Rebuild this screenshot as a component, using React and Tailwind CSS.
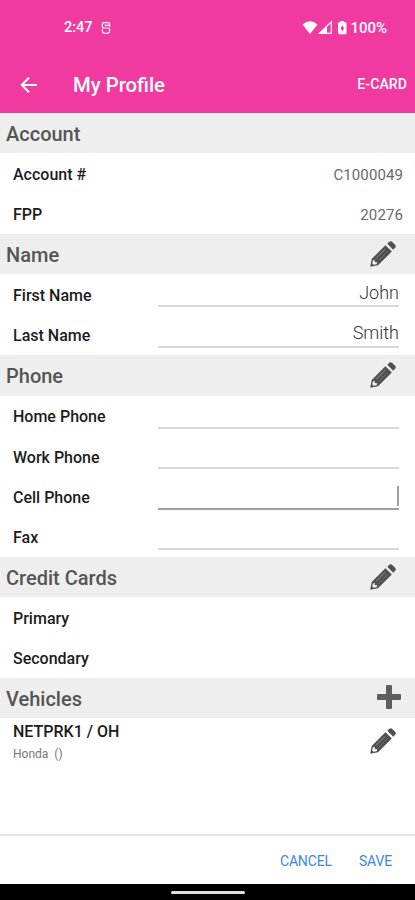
import React from 'react';

const phones = [
  { label: 'Home Phone' },
  { label: 'Work Phone' },
  { label: 'Cell Phone', focused: true },
  { label: 'Fax' },
];

function PencilIcon() {
  return (
    <svg width="28" height="28" viewBox="0 0 28 28" fill="#505050">
      <path d="M18.3 3.8 L20.4 1.7 Q21.7 0.6 23 1.7 L26.3 5 Q27.4 6.3 26.3 7.6 L24.2 9.7 Z" />
      <path
        fillRule="evenodd"
        d="M16.4 5.2 L22.8 11.6 L9 25.3 L1.2 26.8 L2.7 19 Z M3.9 20.4 L3.2 23.4 L4.6 24.8 L7.7 24.2 L8.2 22.3 L5.8 22 L5.6 19.8 Z"
      />
      <path d="M7 18.4 L16 9.4" stroke="#9a9a9a" strokeWidth="0.9" />
      <path d="M9.4 20.6 L18.6 11.4" stroke="#7c7c7c" strokeWidth="0.6" />
    </svg>
  );
}

function PlusIcon() {
  return (
    <svg width="24" height="24" viewBox="0 0 24 24" fill="#5e5e5e">
      <path d="M10 0 H14 Q15 0 15 1 V9 H23 Q24 9 24 10 V14 Q24 15 23 15 H15 V23 Q15 24 14 24 H10 Q9 24 9 23 V15 H1 Q0 15 0 14 V10 Q0 9 1 9 H9 V1 Q9 0 10 0 Z" />
    </svg>
  );
}

function SectionHeader({ title, children }) {
  return (
    <div className="flex h-[40.36px] items-center justify-between bg-[#eeeeee] pl-1.5">
      <h2 className="pt-0.5 text-[20px] font-medium text-[#555555]">{title}</h2>
      {children}
    </div>
  );
}

function Row({ label, value }) {
  return (
    <div className="flex h-[40.36px] items-center justify-between pr-3 pl-[13px] pt-[3px]">
      <span className="text-[16px] font-medium text-[#1c1c1c]">{label}</span>
      {value && <span className="text-[15px] tracking-[0.1px] text-[#6a6a6a]">{value}</span>}
    </div>
  );
}

function FieldRow({ label, value, focused }) {
  return (
    <div className="flex h-[40.36px] items-start pr-4 pl-[13px]">
      <span className="flex h-full w-[145px] items-center pt-[3px] text-[16px] font-medium text-[#1c1c1c]">
        {label}
      </span>
      <div
        className={`flex flex-1 items-center justify-end ${
          focused ? 'h-[34px] border-b-2 border-[#a0a0a0]' : 'h-[33px] border-b-2 border-[#d8d8d8]'
        }`}
      >
        {value && <span className="pt-[5px] text-[18px] font-light text-[#333333]">{value}</span>}
        {focused && <span className="mt-[7px] h-5 w-0.5 bg-[#a0a0a0]" />}
      </div>
    </div>
  );
}

function StatusBar() {
  return (
    <div className="flex h-[56px] items-center justify-between pr-7 pl-16 text-[14.5px] font-medium text-white">
      <div className="flex items-center gap-2">
        <span>2:47</span>
        <svg width="10" height="14" viewBox="0 0 11 14" fill="none" stroke="white" strokeWidth="1.3">
          <path d="M9.5 6 V2.5 Q9.5 1 8 1 H3 Q1.5 1 1.5 2.5 V5.5 Q1.5 7 3 7 H8 Q9.5 7 9.5 8.5 V10 Q9.5 13 5.5 13 Q1.5 13 1.5 10 V8.5" />
          <path d="M4 4 H9.5" />
        </svg>
      </div>
      <div className="flex items-center">
        <svg width="48" height="16" viewBox="0 0 48 16" fill="white">
          <path d="M0.5 4.5 Q8 -1.8 15.5 4.5 L8 14 Z" />
          <path d="M17.5 13.3 L29.3 1.8 V13.3 Z" fill="none" stroke="white" strokeWidth="1.2" />
          <path d="M17.3 13.6 L25 6 V13.6 Z" />
          <path
            fillRule="evenodd"
            d="M38.5 1 H42 V2.3 H43.3 Q44.5 2.3 44.5 3.5 V13 Q44.5 14.2 43.3 14.2 H37.2 Q36 14.2 36 13 V3.5 Q36 2.3 37.2 2.3 H38.5 Z M40.3 5.2 L38.6 8.3 L40.3 11.4 L42 8.3 Z"
          />
        </svg>
        <span className="text-[15px]">100%</span>
      </div>
    </div>
  );
}

export default function App() {
  return (
    <div className="flex h-[900px] w-[415px] flex-col overflow-hidden bg-white font-['Roboto','Noto_Sans',sans-serif]">
      <header className="h-[113px] shrink-0 bg-[#f03a9f] text-white">
        <StatusBar />
        <div className="flex h-[58px] items-center pr-2 pl-5">
          <svg width="18" height="18" viewBox="0 0 18 18" fill="none" stroke="white" strokeWidth="2">
            <path d="M17 9 H2 M9 1.7 L1.7 9 L9 16.3" />
          </svg>
          <h1 className="ml-[35px] pt-px text-[20.3px] font-medium">My Profile</h1>
          <button className="ml-auto text-[14.2px] font-medium">E-CARD</button>
        </div>
      </header>

      <main className="flex-1">
        <SectionHeader title="Account" />
        <Row label="Account #" value="C1000049" />
        <Row label="FPP" value="20276" />

        <SectionHeader title="Name">
          <button className="mr-[18px]"><PencilIcon /></button>
        </SectionHeader>
        <FieldRow label="First Name" value="John" />
        <FieldRow label="Last Name" value="Smith" />

        <SectionHeader title="Phone">
          <button className="mr-[18px]"><PencilIcon /></button>
        </SectionHeader>
        {phones.map((phone) => (
          <FieldRow key={phone.label} label={phone.label} focused={phone.focused} />
        ))}

        <SectionHeader title="Credit Cards">
          <button className="mr-[18px]"><PencilIcon /></button>
        </SectionHeader>
        <Row label="Primary" />
        <Row label="Secondary" />

        <SectionHeader title="Vehicles">
          <button className="mr-[14px] pb-0.5"><PlusIcon /></button>
        </SectionHeader>
        <div className="flex items-center justify-between pt-1 pr-[18px] pl-[13px]">
          <div>
            <p className="text-[16px] leading-5 font-medium text-[#1c1c1c]">NETPRK1 / OH</p>
            <p className="pt-0.5 text-[12px] leading-5 whitespace-pre text-[#777777]">{'Honda  ()'}</p>
          </div>
          <button className="pb-1"><PencilIcon /></button>
        </div>
      </main>

      <footer className="flex h-[50px] shrink-0 items-center justify-end gap-[27px] border-t-2 border-[#e6e6e6] pt-0.5 pr-[23px] text-[14px] tracking-[-0.15px] text-[#3b87e8]">
        <button>CANCEL</button>
        <button>SAVE</button>
      </footer>
      <div className="flex h-4 shrink-0 items-center justify-center bg-black">
        <div className="h-[3px] w-[74px] rounded-full bg-[#dddddd]" />
      </div>
    </div>
  );
}
